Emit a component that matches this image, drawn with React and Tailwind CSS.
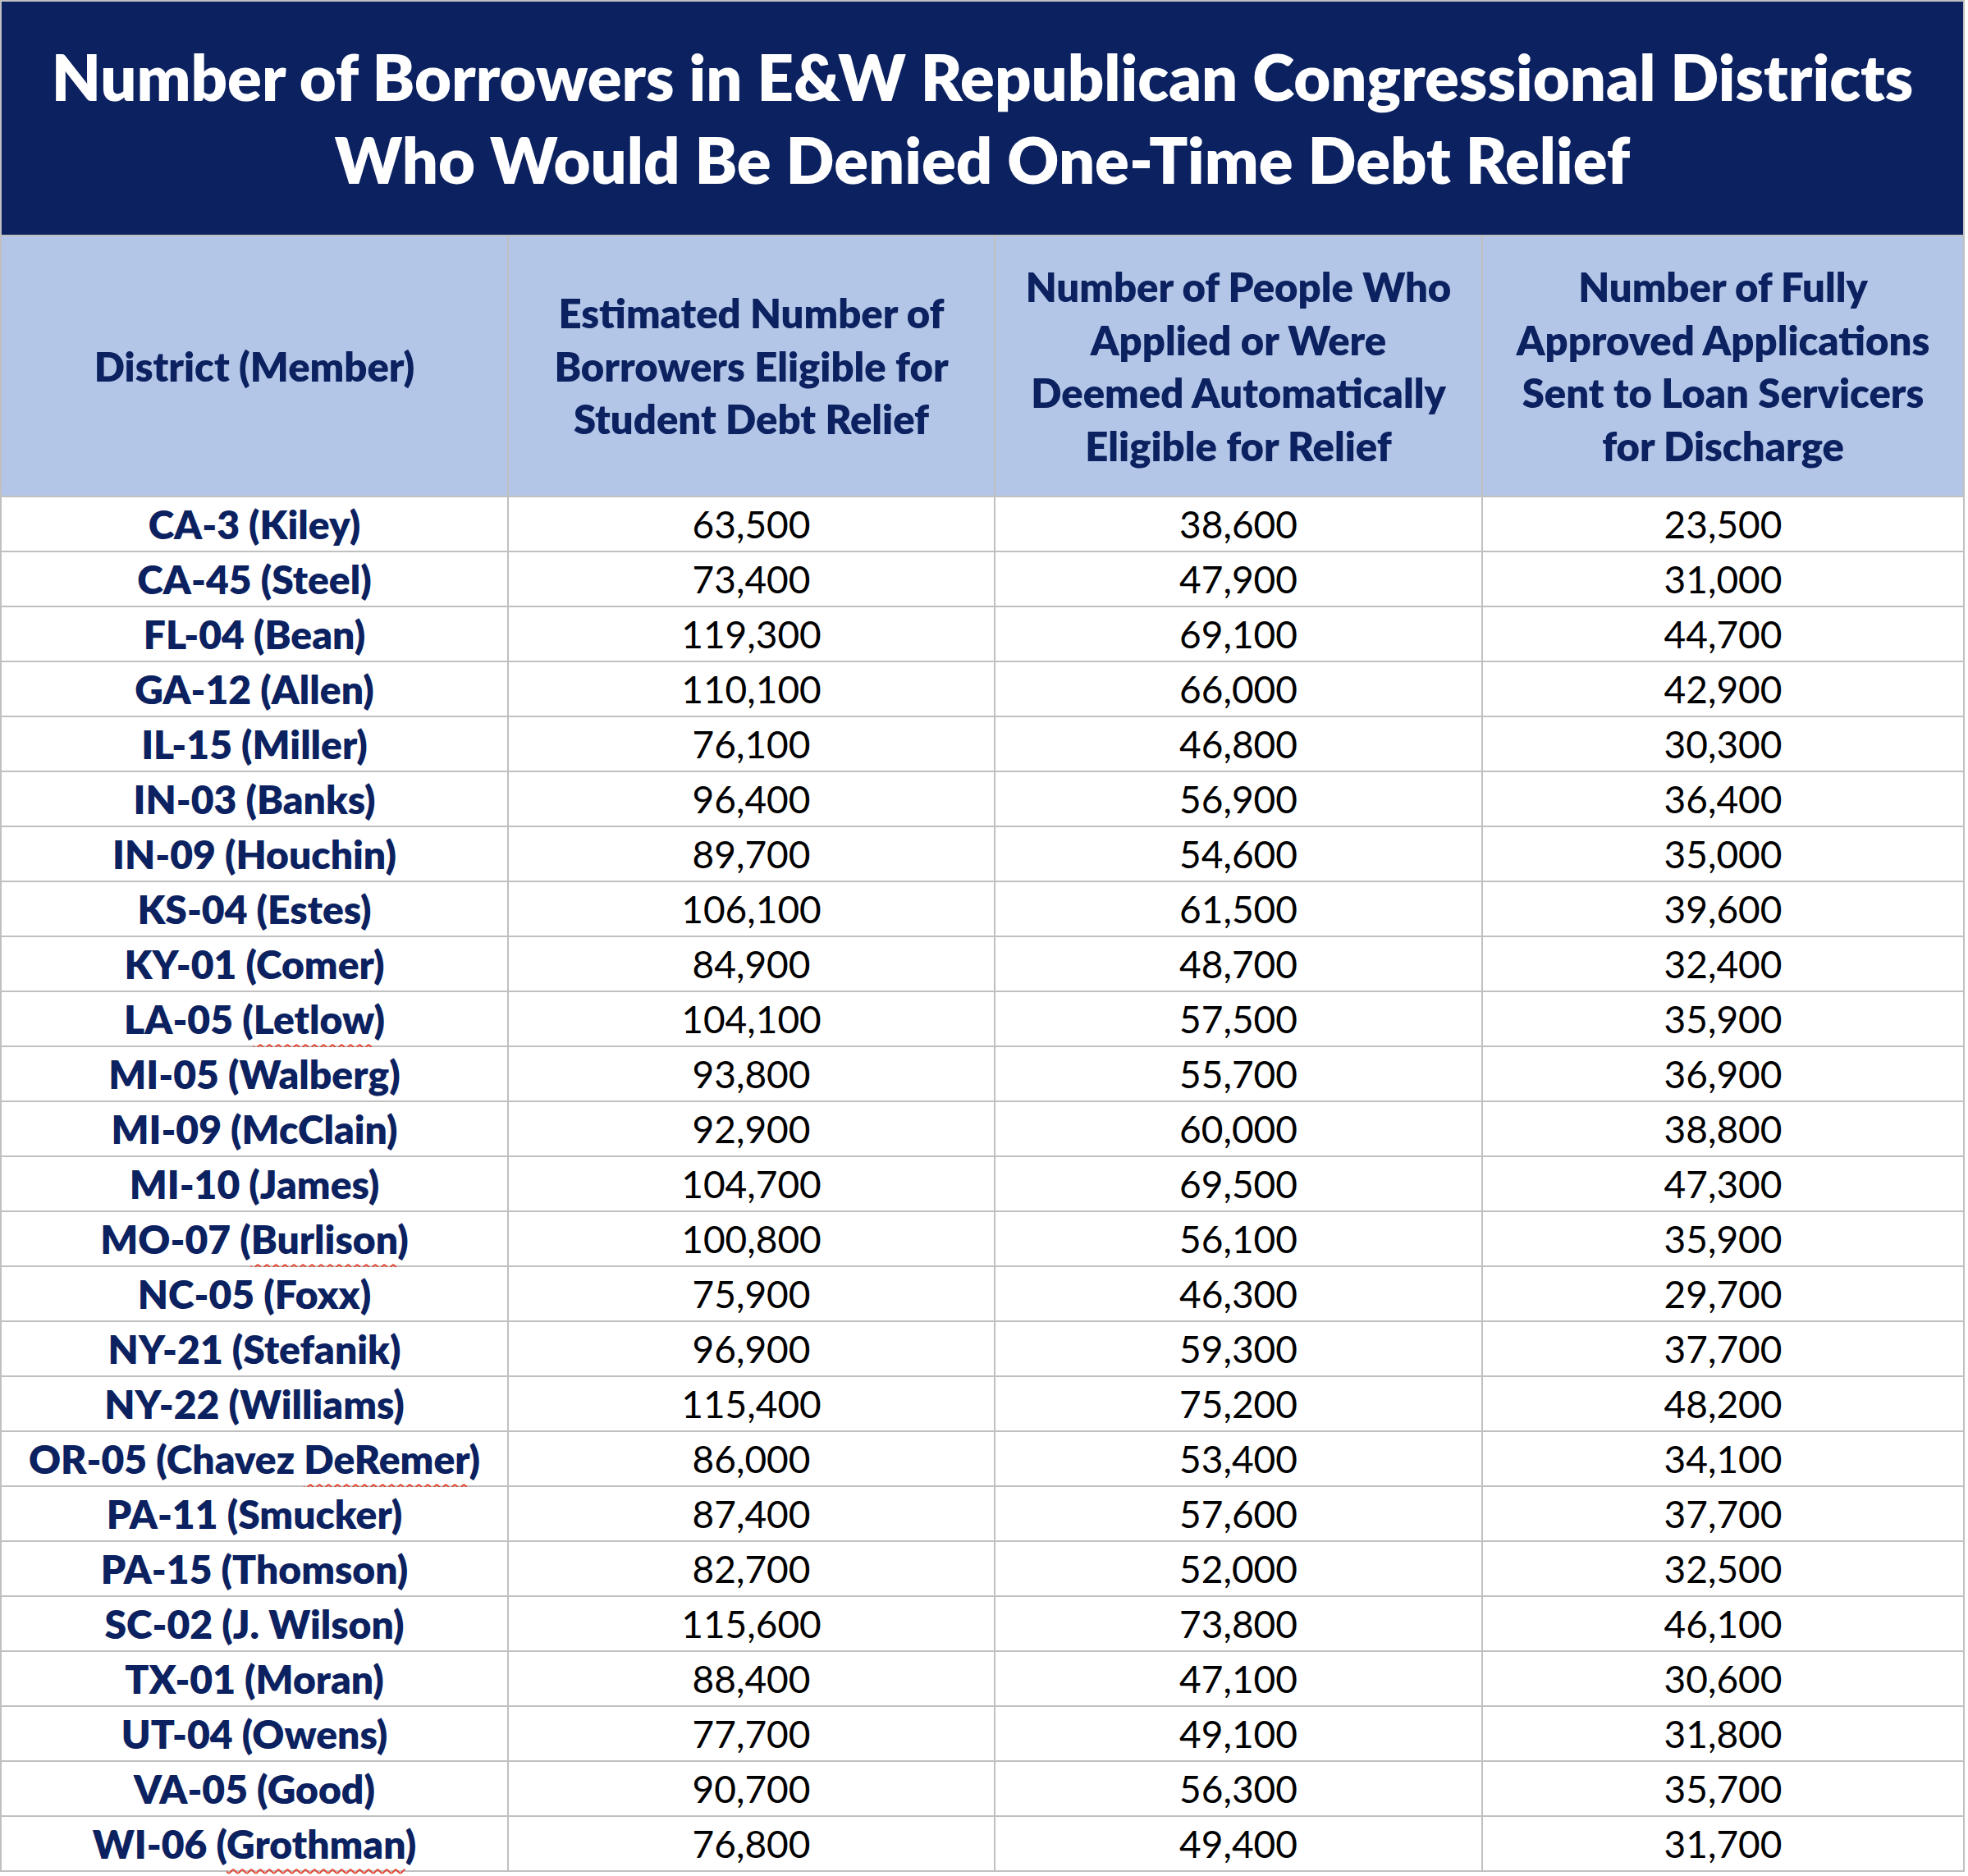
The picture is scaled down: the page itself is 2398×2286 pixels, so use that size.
const rows = [
  ["CA-3 (", "Kiley", ")", false, "63,500", "38,600", "23,500"],
  ["CA-45 (", "Steel", ")", false, "73,400", "47,900", "31,000"],
  ["FL-04 (", "Bean", ")", false, "119,300", "69,100", "44,700"],
  ["GA-12 (", "Allen", ")", false, "110,100", "66,000", "42,900"],
  ["IL-15 (", "Miller", ")", false, "76,100", "46,800", "30,300"],
  ["IN-03 (", "Banks", ")", false, "96,400", "56,900", "36,400"],
  ["IN-09 (", "Houchin", ")", false, "89,700", "54,600", "35,000"],
  ["KS-04 (", "Estes", ")", false, "106,100", "61,500", "39,600"],
  ["KY-01 (", "Comer", ")", false, "84,900", "48,700", "32,400"],
  ["LA-05 (", "Letlow", ")", true, "104,100", "57,500", "35,900"],
  ["MI-05 (", "Walberg", ")", false, "93,800", "55,700", "36,900"],
  ["MI-09 (", "McClain", ")", false, "92,900", "60,000", "38,800"],
  ["MI-10 (", "James", ")", false, "104,700", "69,500", "47,300"],
  ["MO-07 (", "Burlison", ")", true, "100,800", "56,100", "35,900"],
  ["NC-05 (", "Foxx", ")", false, "75,900", "46,300", "29,700"],
  ["NY-21 (", "Stefanik", ")", false, "96,900", "59,300", "37,700"],
  ["NY-22 (", "Williams", ")", false, "115,400", "75,200", "48,200"],
  ["OR-05 (Chavez ", "DeRemer", ")", true, "86,000", "53,400", "34,100"],
  ["PA-11 (", "Smucker", ")", false, "87,400", "57,600", "37,700"],
  ["PA-15 (", "Thomson", ")", false, "82,700", "52,000", "32,500"],
  ["SC-02 (", "J. Wilson", ")", false, "115,600", "73,800", "46,100"],
  ["TX-01 (", "Moran", ")", false, "88,400", "47,100", "30,600"],
  ["UT-04 (", "Owens", ")", false, "77,700", "49,100", "31,800"],
  ["VA-05 (", "Good", ")", false, "90,700", "56,300", "35,700"],
  ["WI-06 (", "Grothman", ")", true, "76,800", "49,400", "31,700"],
]

const headers = [
  ["District (Member)"],
  ["Estimated Number of", "Borrowers Eligible for", "Student Debt Relief"],
  ["Number of People Who", "Applied or Were", "Deemed Automatically", "Eligible for Relief"],
  ["Number of Fully", "Approved Applications", "Sent to Loan Servicers", "for Discharge"],
]

export default function App() {
  return (
    <div className="min-h-screen bg-white" style={{ fontFamily: "Lato, 'Noto Sans', sans-serif" }}>
      <div className="grid w-[2394px] grid-cols-[616px_591px_592px_585px] gap-[2px] bg-[#c0c0c0] p-[2px]">
        <div className="col-span-4 flex h-[284px] items-center justify-center bg-[#0b2160] text-center text-[77.6px] font-extrabold leading-[101px] text-white">
          <div>
            Number of Borrowers in E&amp;W Republican Congressional Districts
            <br />
            Who Would Be Denied One-Time Debt Relief
          </div>
        </div>

        {headers.map((lines, i) => (
          <div
            key={i}
            className="flex h-[316px] items-center justify-center bg-[#b4c6e7] text-center text-[49px] font-extrabold leading-[64.5px] text-[#0b2160]"
          >
            <div>
              {lines.map((l, j) => (
                <div key={j}>{l}</div>
              ))}
            </div>
          </div>
        ))}

        {rows.map(([pre, name, post, flag, a, b, c]) => (
          <div key={pre + name} className="contents">
            <div className="flex h-[65px] items-center justify-center bg-white text-[48px] font-extrabold leading-none text-[#0b2160]">
              <span>
                {pre}
                <span
                  className={
                    flag
                      ? "underline decoration-[#e5412d] decoration-wavy decoration-[2px] underline-offset-[12px]"
                      : ""
                  }
                >
                  {name}
                </span>
                {post}
              </span>
            </div>
            {[a, b, c].map((v, k) => (
              <div key={k} className="flex h-[65px] items-center justify-center bg-white text-[46px] leading-none text-black">
                {v}
              </div>
            ))}
          </div>
        ))}
      </div>
    </div>
  )
}
